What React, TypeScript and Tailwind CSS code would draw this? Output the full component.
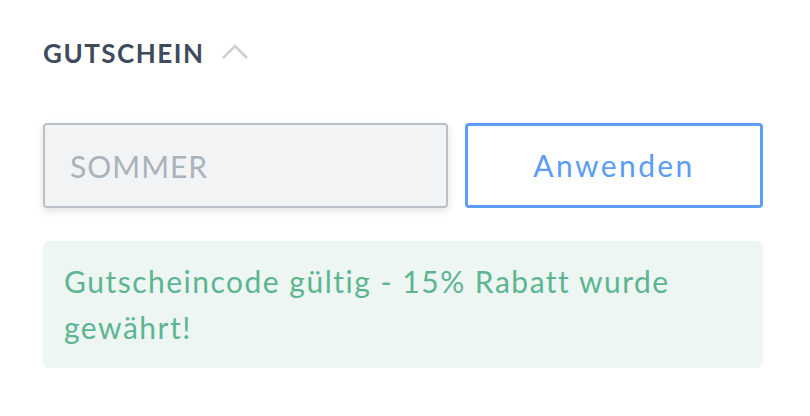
import { useState } from "react";

const font = { fontFamily: "Lato, 'Open Sans', sans-serif" };

const Voucher = (): JSX.Element => {
  const [code, setCode] = useState<string>("");
  return (
    <div className="w-[720px] ml-[43px] pt-[38px]" style={font}>
      <div className="flex items-center gap-[17px] h-[30px]">
        <span className="text-[26px] leading-[30px] font-bold text-[#3d4b5c] tracking-[1.5px]">
          GUTSCHEIN
        </span>
        <svg width="28" height="18" viewBox="0 0 28 18" className="-mt-[3px]">
          <polyline
            points="2,15 14,3 26,15"
            fill="none"
            stroke="#cdd1d6"
            strokeWidth="2.6"
          />
        </svg>
      </div>

      <div className="flex gap-[17px] mt-[55px] h-[85px]">
        <input
          value={code}
          onChange={(e) => setCode(e.target.value)}
          placeholder="SOMMER"
          className="w-[405px] h-full rounded-[4px] border-2 border-[#b9c0c7] bg-[#f2f3f5] px-[25px] text-[30px] tracking-[1px] text-[#3d4b5c] placeholder:text-[#aab2ba] shadow-[0_3px_8px_rgba(0,0,0,0.12)] outline-none"
          style={font}
        />
        <button
          className="flex-1 h-full rounded-[4px] border-[3px] border-[#5f9ef7] bg-white text-[30px] tracking-[2.4px] text-[#5b9cf5]"
          style={font}
        >
          Anwenden
        </button>
      </div>

      <div className="mt-[33px] rounded-[6px] bg-[#edf6f3] px-[21px] py-[18px]">
        <p className="text-[30px] leading-[45.5px] tracking-[1.5px] text-[#5cb590]">
          Gutscheincode gültig - 15% Rabatt wurde gewährt!
        </p>
      </div>
    </div>
  );
};

export default function App(): JSX.Element {
  return (
    <div className="w-[810px] h-[416px] bg-white">
      <Voucher />
    </div>
  );
}
